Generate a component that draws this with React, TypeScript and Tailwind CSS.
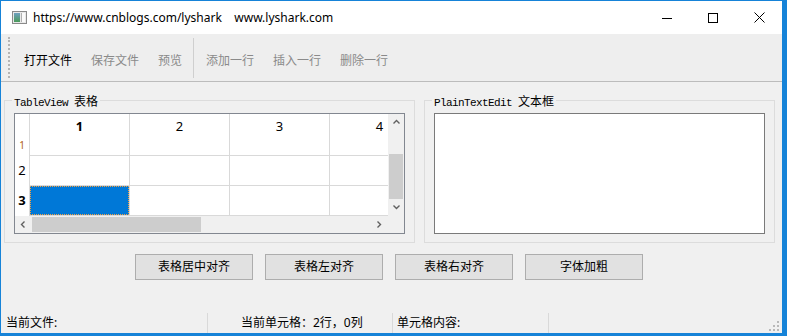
import React from 'react';

const ui = "font-['Noto_Sans','Noto_Sans_CJK_SC',sans-serif]";

const WinIcon: React.FC = () => (
  <svg width="15" height="13" viewBox="0 0 15 13">
    <defs>
      <linearGradient id="g1" x1="0" y1="0" x2="0" y2="1">
        <stop offset="0" stopColor="#6fa0c0" />
        <stop offset="1" stopColor="#4a9a5a" />
      </linearGradient>
    </defs>
    <rect x="0.5" y="0.5" width="14" height="12" fill="#e8e8e8" stroke="#8a8a8a" />
    <rect x="2" y="2" width="6" height="9" fill="url(#g1)" />
    <rect x="9" y="2" width="4" height="9" fill="#fafafa" />
    <rect x="9" y="2" width="1" height="9" fill="#b0b0b0" />
  </svg>
);

const Chevron: React.FC<{ dir: 'up' | 'down' | 'left' | 'right' }> = ({ dir }) => {
  const d = {
    up: 'M1.5 5.5 L4.5 2.5 L7.5 5.5',
    down: 'M1.5 2.5 L4.5 5.5 L7.5 2.5',
    left: 'M5.5 1.5 L2.5 4.5 L5.5 7.5',
    right: 'M2.5 1.5 L5.5 4.5 L2.5 7.5',
  }[dir];
  return (
    <svg width="9" height="9" viewBox="0 0 9 9">
      <path d={d} fill="none" stroke="#606060" strokeWidth="1.4" />
    </svg>
  );
};

const TableView: React.FC = () => {
  const cols = ['1', '2', '3', '4'];
  return (
    <div className="w-[391px] h-[121px] border border-[#828790] bg-white flex flex-col">
      <div className="flex h-[102px]">
        <div className="w-[373px] overflow-hidden flex flex-col">
          {/* header */}
          <div className="flex h-[24px] shrink-0">
            <div className="w-[14px] shrink-0" />
            {cols.map((c, i) => (
              <div
                key={c}
                className={`w-[100px] shrink-0 border-l border-[#d9d9d9] flex items-center justify-center text-[13px] text-black pt-[2px] ${i === 0 ? 'font-bold' : ''}`}
              >
                {c}
              </div>
            ))}
          </div>
          {/* row 1 */}
          <div className="flex h-[18px] shrink-0">
            <div className="w-[14px] shrink-0 flex items-start justify-center text-[10px] leading-[12px] text-[#b06010] pt-[1px]">1</div>
            {cols.map((c) => (
              <div key={c} className="w-[100px] shrink-0 border-l border-b border-[#d9d9d9]" />
            ))}
          </div>
          {/* row 2 */}
          <div className="flex h-[30px] shrink-0">
            <div className="w-[14px] shrink-0 flex items-center justify-center text-[13px] text-black">2</div>
            {cols.map((c) => (
              <div key={c} className="w-[100px] shrink-0 border-l border-b border-[#d9d9d9]" />
            ))}
          </div>
          {/* row 3 */}
          <div className="flex h-[30px] shrink-0">
            <div className="w-[14px] shrink-0 flex items-center justify-center text-[13px] font-bold text-black">3</div>
            {cols.map((c, i) => (
              <div key={c} className="w-[100px] shrink-0 border-l border-b border-[#d9d9d9]">
                {i === 0 && <div className="h-full w-full bg-[#0078d7] border border-dotted border-[#f4a040]" />}
              </div>
            ))}
          </div>
        </div>
        {/* vertical scrollbar */}
        <div className="w-[16px] bg-[#f0f0f0] flex flex-col">
          <div className="h-[17px] flex items-center justify-center">
            <Chevron dir="up" />
          </div>
          <div className="h-[23px]" />
          <div className="h-[45px] mx-[1px] bg-[#cdcdcd]" />
          <div className="flex-1 flex items-center justify-center">
            <Chevron dir="down" />
          </div>
        </div>
      </div>
      <div className="flex h-[17px]">
        <div className="w-[373px] bg-[#f0f0f0] flex items-center">
          <div className="w-[17px] flex items-center justify-center">
            <Chevron dir="left" />
          </div>
          <div className="w-[169px] h-[15px] bg-[#cdcdcd]" />
          <div className="flex-1" />
          <div className="w-[17px] flex items-center justify-center">
            <Chevron dir="right" />
          </div>
        </div>
        <div className="w-[16px] bg-[#f0f0f0]" />
      </div>
    </div>
  );
};

const GroupTitle: React.FC<{ latin: string; cjk: string }> = ({ latin, cjk }) => (
  <legend className="-ml-[2px] px-[2px] h-[14px] leading-[14px] text-black whitespace-pre">
    <span className="font-['Liberation_Mono',monospace] text-[11px] tracking-[-0.6px]">{latin}</span>
    <span className="font-['Noto_Sans_CJK_SC',sans-serif] text-[12px]">{cjk}</span>
  </legend>
);

export default function App() {
  const tools = [
    { t: '打开文件', on: true },
    { t: '保存文件', on: false },
    { t: '预览', on: false },
  ];
  const tools2 = ['添加一行', '插入一行', '删除一行'];
  const buttons = ['表格居中对齐', '表格左对齐', '表格右对齐', '字体加粗'];

  return (
    <div className={`w-[787px] h-[336px] bg-[#1683d8] overflow-hidden pt-[1px] pl-[1px] ${ui}`}>
      <div className="w-[781px] h-[332px] flex flex-col bg-[#f0f0f0]">
        {/* title bar */}
        <div className="h-[33px] bg-white flex items-center shrink-0">
          <div className="pl-[11px] pr-[6px] flex items-center">
            <WinIcon />
          </div>
          <span className="text-[12px] text-black whitespace-pre font-['Noto_Sans',sans-serif]">
            {'https://www.cnblogs.com/lyshark    www.lyshark.com'}
          </span>
          <div className="ml-auto flex h-full">
            <div className="w-[46px] h-full flex items-center justify-center">
              <svg width="10" height="10" viewBox="0 0 10 10">
                <path d="M0 5.5 H10" stroke="#000" strokeWidth="1" />
              </svg>
            </div>
            <div className="w-[46px] h-full flex items-center justify-center">
              <svg width="10" height="10" viewBox="0 0 10 10">
                <rect x="0.5" y="0.5" width="9" height="9" fill="none" stroke="#000" strokeWidth="1" />
              </svg>
            </div>
            <div className="w-[46px] h-full flex items-center justify-center">
              <svg width="11" height="11" viewBox="0 0 11 11">
                <path d="M0.5 0.5 L10.5 10.5 M10.5 0.5 L0.5 10.5" stroke="#000" strokeWidth="1" />
              </svg>
            </div>
          </div>
        </div>

        {/* toolbar */}
        <div className="h-[48px] shrink-0 bg-[#eeeeee] border-b border-[#bcbcbc] flex items-center">
          <div className="ml-[7px] w-[2px] h-[41px] border-l-2 border-dotted border-[#b4b4b4]" />
          <div className="ml-[14px] flex items-center gap-[19px] text-[12px] pt-[6px]">
            {tools.map((x) => (
              <span key={x.t} className={x.on ? 'text-black' : 'text-[#8a8a8a]'}>
                {x.t}
              </span>
            ))}
          </div>
          <div className="ml-[11px] w-px h-[40px] bg-[#cfcfcf]" />
          <div className="ml-[12px] flex items-center gap-[19px] text-[12px] text-[#8a8a8a] pt-[6px]">
            {tools2.map((t) => (
              <span key={t}>{t}</span>
            ))}
          </div>
        </div>

        {/* main area */}
        <div className="flex-1 flex flex-col">
          <div className="flex mt-[11px] ml-[3px] gap-[9px]">
            <fieldset className="w-[411px] h-[150px] border border-[#dcdcdc] px-[9px]">
              <GroupTitle latin="TableView " cjk="表格" />
              <div className="mt-[6px]">
                <TableView />
              </div>
            </fieldset>
            <fieldset className="w-[351px] h-[150px] border border-[#dcdcdc] px-[9px]">
              <GroupTitle latin="PlainTextEdit " cjk="文本框" />
              <div className="mt-[6px] w-[331px] h-[121px] bg-white border border-[#7a7a7a]" />
            </fieldset>
          </div>

          <div className="flex ml-[134px] mt-[11px] gap-[12px]">
            {buttons.map((b) => (
              <button
                key={b}
                className="w-[118px] h-[26px] bg-[#e1e1e1] border border-[#adadad] text-[12px] text-black"
              >
                {b}
              </button>
            ))}
          </div>

          {/* status bar */}
          <div className="mt-auto h-[20px] flex items-center text-[12px] text-black">
            <div className="w-[206px] h-full flex items-center pl-[5px]">当前文件:</div>
            <div className="w-px h-full bg-[#d9d9d9]" />
            <div className="w-[184px] h-full flex items-center pl-[33px]">当前单元格：2行，0列</div>
            <div className="w-px h-full bg-[#d9d9d9]" />
            <div className="w-[155px] h-full flex items-center pl-[4px]">单元格内容:</div>
            <div className="w-px h-full bg-[#d9d9d9]" />
            <div className="flex-1 h-full flex items-end justify-end pr-[3px] pb-[2px]">
              <svg width="10" height="10" viewBox="0 0 10 10">
                <g fill="#b8b8b8">
                  <rect x="8" y="0" width="2" height="2" />
                  <rect x="4" y="4" width="2" height="2" />
                  <rect x="8" y="4" width="2" height="2" />
                  <rect x="0" y="8" width="2" height="2" />
                  <rect x="4" y="8" width="2" height="2" />
                  <rect x="8" y="8" width="2" height="2" />
                </g>
              </svg>
            </div>
          </div>
        </div>
      </div>
    </div>
  );
}
